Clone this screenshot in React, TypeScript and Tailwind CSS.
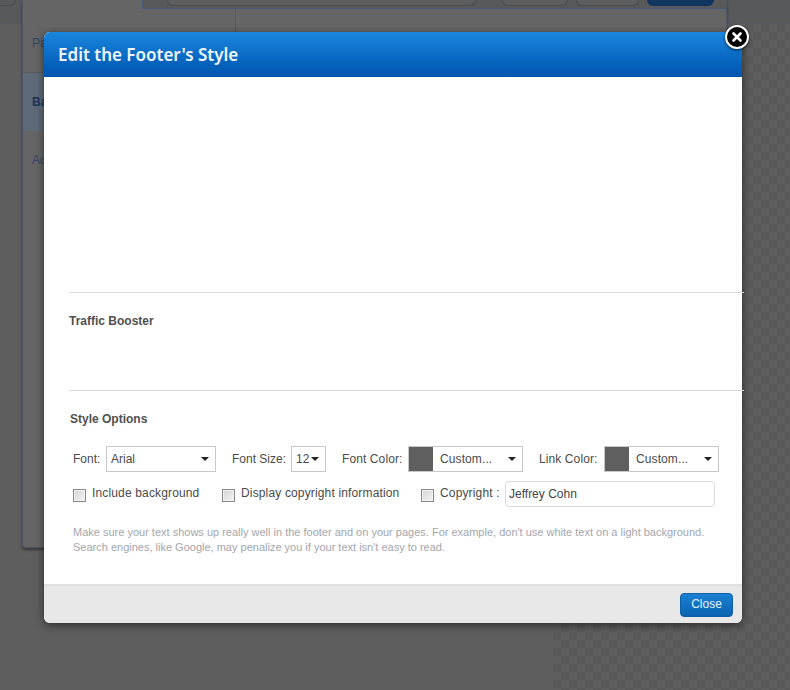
const arial = "font-['Liberation_Sans',Arial,sans-serif]";

function Caret() {
  return <span className="h-0 w-0 border-x-[4px] border-t-[4px] border-x-transparent border-t-[#222]" />;
}

function FakeSelect({ width, value, swatch }: { width: string; value: string; swatch?: boolean }) {
  return (
    <div className={`flex h-[26px] items-center border border-[#c8c8c8] bg-white ${width}`}>
      {swatch && <span className="mr-[7px] h-[24px] w-[24px] shrink-0 bg-[#5f5f5f]" />}
      <span className={`flex-1 ${swatch ? "tracking-[0.1px]" : "pl-1"} text-[12px] text-[#4a4a4a]`}>{value}</span>
      <span className="mr-[6px] flex">
        <Caret />
      </span>
    </div>
  );
}

function Check({ label, className }: { label: string; className?: string }) {
  return (
    <label className={`flex items-center gap-[6px] ${className ?? ""}`}>
      <span className="mt-[2px] h-[13px] w-[13px] shrink-0 border border-[#8a8a8a] bg-gradient-to-br from-[#d4d4d4] to-[#f4f4f4] shadow-[inset_0_0_0_1px_#f2f2f2]" />
      <span className="-mt-[2px] text-[12px] tracking-[0.15px] text-[#4a4a4a]">{label}</span>
    </label>
  );
}

function ToolGroup({ width, className }: { width: string; className?: string }) {
  return <div className={`h-[6px] rounded-b-md border border-t-0 border-[#4c4c4c] bg-[#5e5e5e] ${width} ${className ?? ""}`} />;
}

export default function App() {
  return (
    <div className={`relative h-[690px] w-[790px] overflow-hidden bg-[#5e5e5e] ${arial}`}>
      {/* page behind the overlay */}
      <div className="h-[24px] border-b border-[#535962] bg-[#58595b]">
        <div className="h-[6px] w-[16px] rounded-br-md border-r border-b border-[#4c4c4c]" />
      </div>
      <div className="flex h-[666px]">
        <div className="w-[553px]" />
        <div className="flex-1 bg-[repeating-conic-gradient(#5e5e5e_0_25%,#595959_0_50%)] bg-[length:16px_16px]" />
      </div>

      <div className="absolute left-[22px] top-0 flex h-[548px] w-[705px] flex-col rounded-b border-x border-b border-[#4d5768] bg-[#656565] shadow-[0_2px_3px_rgba(0,0,0,0.4)]">
        <div className="ml-[119px] flex h-[9px] border-b border-l border-[#475a78] bg-[#58595b]">
          <ToolGroup width="w-[309px]" className="ml-[24px]" />
          <ToolGroup width="w-[66px]" className="ml-[26px]" />
          <ToolGroup width="w-[63px]" className="ml-[8px]" />
          <div className="ml-[8px] h-[6px] w-[67px] rounded-b-md bg-[#12355f]" />
        </div>
        <div className="flex flex-1">
          <div className="w-[213px] border-r border-[#5a5a5a] text-[12px]">
            <div className="flex h-[64px] items-center whitespace-nowrap border-b border-[#5a5a5a] pl-[9px] pt-[5px] text-[#33456b]">Page</div>
            <div className="flex h-[58px] items-center whitespace-nowrap bg-[#5f6a78] pl-[9px] font-bold text-[#1e3358]">Background</div>
            <div className="flex h-[58px] items-center whitespace-nowrap pl-[9px] text-[#33456b]">Advanced</div>
          </div>
        </div>
      </div>

      {/* modal */}
      <div className="absolute left-[44px] top-[32px] flex h-[591px] w-[698px] flex-col rounded-md bg-white shadow-[0_2px_8px_rgba(0,0,0,0.55)]">
        <div className="flex h-[45px] shrink-0 items-center rounded-t-md bg-gradient-to-b from-[#1a86de] to-[#0054ae] pl-[14px]">
          <h1 className="font-['Noto_Sans',sans-serif] text-[17px] font-semibold text-[#eef6fd]">Edit the Footer's Style</h1>
        </div>

        <div className="flex-1 pl-[25px]">
          <div className="mt-[215px] h-px w-[675px] bg-[#d9d9d9]" />
          <h2 className="mt-[21px] text-[12px] leading-[14px] font-bold text-[#505050]">Traffic Booster</h2>
          <div className="mt-[62px] h-px w-[675px] bg-[#d9d9d9]" />
          <h2 className="ml-px mt-[21px] text-[12px] leading-[14px] font-bold text-[#505050]">Style Options</h2>

          <div className="ml-[4px] mt-[20px] flex items-center text-[12px] text-[#4a4a4a]">
            <span className="w-[33px]">Font:</span>
            <FakeSelect width="w-[110px]" value="Arial" />
            <span className="ml-[16px] w-[59px]">Font Size:</span>
            <FakeSelect width="w-[35px]" value="12" />
            <span className="ml-[16px] w-[66px] tracking-[0.1px]">Font Color:</span>
            <FakeSelect width="w-[115px]" value="Custom..." swatch />
            <span className="ml-[16px] w-[65px] tracking-[0.1px]">Link Color:</span>
            <FakeSelect width="w-[115px]" value="Custom..." swatch />
          </div>

          <div className="ml-[4px] mt-[9px] flex h-[26px] items-center">
            <Check label="Include background" className="w-[149px]" />
            <Check label="Display copyright information" className="w-[199px]" />
            <Check label="Copyright :" className="w-[84px]" />
            <div className="flex h-[26px] w-[210px] items-center rounded-sm border border-[#dadada] pl-[3px] text-[12px] text-[#444]">Jeffrey Cohn</div>
          </div>

          <p className="ml-[4px] mt-[18px] text-[11px] leading-[15px] text-[#a3a6ad]">
            Make sure your text shows up really well in the footer and on your pages. For example, don't use white text on a light background.
            <br />
            Search engines, like Google, may penalize you if your text isn't easy to read.
          </p>
        </div>

        <div className="flex h-[39px] shrink-0 items-center justify-end rounded-b-md border-t-2 border-[#e0e0e0] bg-[#e8e8e8] pr-[9px]">
          <button type="button" className="h-[24px] w-[53px] rounded-sm border border-[#0d5fa8] bg-gradient-to-b from-[#1a80d2] to-[#0a64b0] pb-[2px] text-[12px] text-[#e6f2fb]">
            Close
          </button>
        </div>

        <button type="button" aria-label="Close" className="absolute -right-[7px] -top-[7px] flex h-[24px] w-[24px] items-center justify-center rounded-full border-2 border-white bg-black shadow-[0_1px_3px_rgba(0,0,0,0.7)]">
          <svg viewBox="0 0 12 12" className="h-[12px] w-[12px]">
            <path d="M2.5 2.5l7 7M9.5 2.5l-7 7" stroke="#fff" strokeWidth="2.6" strokeLinecap="round" />
          </svg>
        </button>
      </div>
    </div>
  );
}
